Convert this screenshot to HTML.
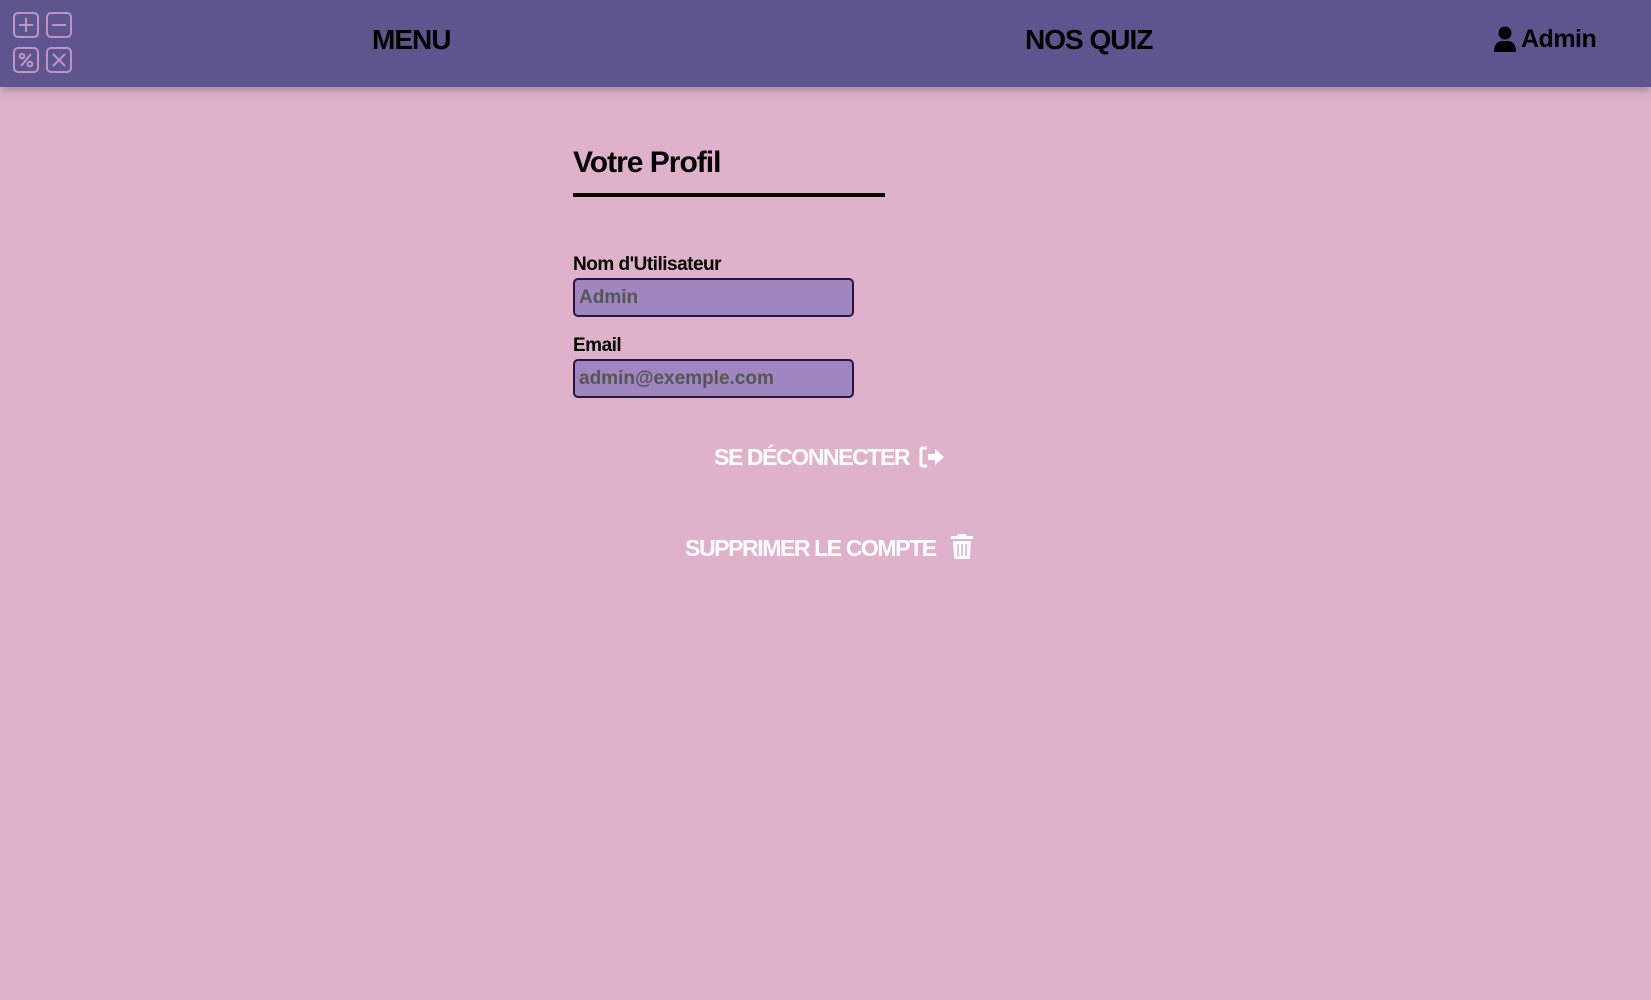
<!DOCTYPE html>
<html><head><meta charset="utf-8"><style>
html,body{margin:0;padding:0;width:1651px;height:1000px;background:#e0b1cb;font-family:"Liberation Sans",sans-serif;overflow:hidden}
nav{position:absolute;left:0;top:0;width:1651px;height:87px;background:#5e548e;box-shadow:0 3px 8px rgba(0,0,0,.25)}
.nt{position:absolute;top:22px;font-weight:bold;font-size:28px;color:#000;letter-spacing:-1px}
.ic{position:absolute;width:22px;height:22px;border:2px solid #be95c4;border-radius:5px}
.t{position:absolute;left:573px;top:146px;font-size:30px;font-weight:bold;letter-spacing:-1px}
.ul{position:absolute;left:573px;top:193px;width:312px;height:4px;background:#000}
.lb{position:absolute;left:573px;font-size:19px;font-weight:bold;letter-spacing:-.5px}
.in{position:absolute;left:573px;height:35px;background:#9f86c0;border:2px solid #231942;border-radius:5px;box-sizing:content-box;color:#555;font-weight:bold;font-size:19px;line-height:35px;padding-left:4px;width:273px}
.bt{position:absolute;color:#fff;font-weight:bold;font-size:23px;letter-spacing:-1.4px}
</style></head><body>
<nav>
<div class="ic" style="left:13px;top:12px"><svg width="22" height="22"><path d="M11 4V18M4 11H18" stroke="#be95c4" stroke-width="2"/></svg></div>
<div class="ic" style="left:46px;top:12px"><svg width="22" height="22"><path d="M4 11H18" stroke="#be95c4" stroke-width="2"/></svg></div>
<div class="ic" style="left:13px;top:47px"><svg width="22" height="22"><circle cx="7" cy="7" r="2.3" fill="none" stroke="#be95c4" stroke-width="2"/><circle cx="15" cy="15" r="2.3" fill="none" stroke="#be95c4" stroke-width="2"/><path d="M16 5L6 17" stroke="#be95c4" stroke-width="2"/></svg></div>
<div class="ic" style="left:46px;top:47px"><svg width="22" height="22"><path d="M5 5L17 17M17 5L5 17" stroke="#be95c4" stroke-width="2"/></svg></div>
<div class="nt" style="left:372px;top:24px">MENU</div>
<div class="nt" style="left:1025px;top:24px">NOS QUIZ</div>
<svg style="position:absolute;left:1494px;top:26px" width="22" height="26" viewBox="0 0 22 26"><circle cx="11" cy="7" r="6.5"/><path d="M0 26C0 18 4 15 8 15H14C18 15 22 18 22 26Z"/></svg>
<div class="nt" style="left:1521px;font-size:25px;top:25px;letter-spacing:-.5px">Admin</div>
</nav>
<div class="t">Votre Profil</div>
<div class="ul"></div>
<div class="lb" style="top:254px">Nom d'Utilisateur</div>
<div class="in" style="top:278px">Admin</div>
<div class="lb" style="top:335px">Email</div>
<div class="in" style="top:359px">admin@exemple.com</div>
<div class="bt" style="left:714px;top:444px">SE DÉCONNECTER</div>
<svg style="position:absolute;left:919px;top:446px" width="26" height="22" viewBox="0 0 26 22"><path d="M8 2H4Q2 2 2 4V18Q2 20 4 20H8" fill="none" stroke="#fff" stroke-width="3"/><path d="M9 8H16V3L25 11L16 19V14H9Z" fill="#fff"/></svg>
<div class="bt" style="left:685px;top:535px">SUPPRIMER LE COMPTE</div>
<svg style="position:absolute;left:951px;top:533px" width="22" height="26" viewBox="0 0 22 26"><path d="M7 1H15L16 3H22V6H0V3H6Z" fill="#fff"/><path d="M2 8H20L19 24Q19 26 17 26H5Q3 26 3 24Z" fill="#fff"/><path d="M7 11V23M11 11V23M15 11V23" stroke="#e0b1cb" stroke-width="1.6"/></svg>
</body></html>
